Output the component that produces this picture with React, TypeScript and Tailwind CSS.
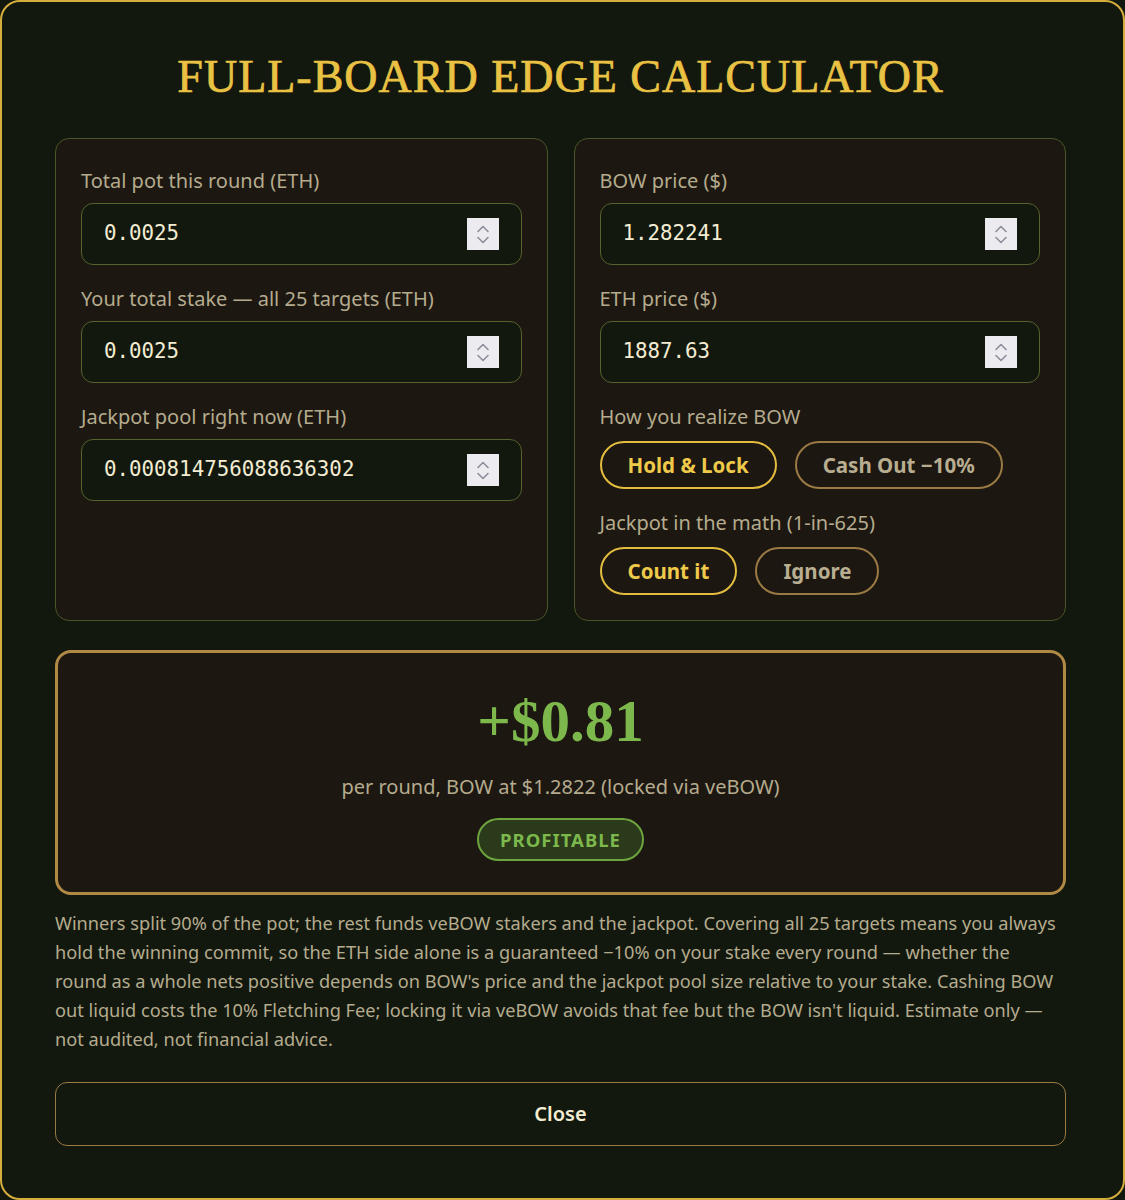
import React from "react";

const sans = "font-['Noto_Sans',sans-serif]";

function Spinner() {
  return (
    <div className="flex h-8 w-8 flex-col items-center justify-center gap-[3px] bg-[#ebebf0]">
      <svg width="14" height="8" viewBox="0 0 14 8" fill="none" stroke="#8e8e9c" strokeWidth="1.6" strokeLinecap="round" strokeLinejoin="round">
        <path d="M2 6.5 L7 1.5 L12 6.5" />
      </svg>
      <svg width="14" height="8" viewBox="0 0 14 8" fill="none" stroke="#8e8e9c" strokeWidth="1.6" strokeLinecap="round" strokeLinejoin="round">
        <path d="M2 1.5 L7 6.5 L12 1.5" />
      </svg>
    </div>
  );
}

function Field({ label, value }: { label: string; value: string }) {
  return (
    <div>
      <div className="mb-2 text-[20px] leading-[28px] text-[#b5ab8e]">{label}</div>
      <div className="flex h-[62px] items-center justify-between rounded-xl border-[1.5px] border-[#56632f] bg-[#12180e] pl-[22px] pr-[22px]">
        <span className="font-['DejaVu_Sans_Mono',monospace] text-[20.8px] text-[#f3ecd2]">{value}</span>
        <Spinner />
      </div>
    </div>
  );
}

function Pill({ label, active }: { label: string; active?: boolean }) {
  return (
    <button
      className={
        active
          ? "h-12 rounded-full border-2 border-[#e3bd3f] px-[26px] text-[20.5px] font-bold text-[#efc94a]"
          : "h-12 rounded-full border-2 border-[#9a7a45] px-[26px] text-[20.5px] font-bold text-[#b8ad90]"
      }
    >
      {label}
    </button>
  );
}

function Options({ label, options }: { label: string; options: { label: string; active?: boolean }[] }) {
  return (
    <div>
      <div className="mb-2.5 text-[20px] leading-[28px] text-[#b5ab8e]">{label}</div>
      <div className="flex gap-[18px]">
        {options.map((o) => (
          <Pill key={o.label} label={o.label} active={o.active} />
        ))}
      </div>
    </div>
  );
}

export default function App() {
  return (
    <div className={`${sans} h-[1200px] w-full bg-[#12180e]`}>
      <div className="flex h-[1200px] flex-col rounded-[20px] border-2 border-[#d4ad3c] bg-[#12180e] pl-[53px] pr-[57px] pt-[45px]">
        <h1 className="mb-[31px] text-center font-['Liberation_Serif',serif] text-[46px] leading-[60px] tracking-[1px] text-[#e9c244] [-webkit-text-stroke:0.7px_#e9c244]">
          FULL-BOARD EDGE CALCULATOR
        </h1>

        <div className="grid grid-cols-2 gap-[26px]">
          <div className="flex flex-col gap-5 rounded-[14px] border border-[#4a5628] bg-[#1c1710] px-[25px] pb-[25px] pt-7">
            <Field label="Total pot this round (ETH)" value="0.0025" />
            <Field label="Your total stake — all 25 targets (ETH)" value="0.0025" />
            <Field label="Jackpot pool right now (ETH)" value="0.000814756088636302" />
          </div>
          <div className="flex flex-col gap-5 rounded-[14px] border border-[#4a5628] bg-[#1c1710] px-[25px] pb-[25px] pt-7">
            <Field label="BOW price ($)" value="1.282241" />
            <Field label="ETH price ($)" value="1887.63" />
            <Options
              label="How you realize BOW"
              options={[{ label: "Hold & Lock", active: true }, { label: "Cash Out −10%" }]}
            />
            <Options
              label="Jackpot in the math (1-in-625)"
              options={[{ label: "Count it", active: true }, { label: "Ignore" }]}
            />
          </div>
        </div>

        <div className="mt-[29px] flex flex-col items-center rounded-2xl border-[3px] border-[#b08a45] bg-[#1c1710] pb-[31px] pt-[36px]">
          <div className="font-['Liberation_Serif',serif] text-[59px] font-bold leading-[64px] text-[#7cb84c]">+$0.81</div>
          <div className="mt-[20px] text-[20px] leading-[28px] text-[#b5ab8e]">per round, BOW at $1.2822 (locked via veBOW)</div>
          <div className="mt-[17px] flex h-[43px] items-center rounded-full border-2 border-[#6da43f] bg-[#2a3a1a] px-[21px] text-[18.5px] font-bold tracking-[1px] text-[#7cb84c]">
            PROFITABLE
          </div>
        </div>

        <p className="mt-[14px] text-[18.2px] leading-[29px] text-[#b5ab8e]">
          Winners split 90% of the pot; the rest funds veBOW stakers and the jackpot. Covering all 25 targets means you always hold the winning commit, so the ETH side alone is a guaranteed −10% on your stake every round — whether the round as a whole nets positive depends on BOW's price and the jackpot pool size relative to your stake. Cashing BOW out liquid costs the 10% Fletching Fee; locking it via veBOW avoids that fee but the BOW isn't liquid. Estimate only — not audited, not financial advice.
        </p>

        <button className="mt-[28px] h-16 w-full rounded-xl border-[1.5px] border-[#9a7a45] text-[20px] font-semibold text-[#f3ecd2]">
          Close
        </button>
      </div>
    </div>
  );
}
